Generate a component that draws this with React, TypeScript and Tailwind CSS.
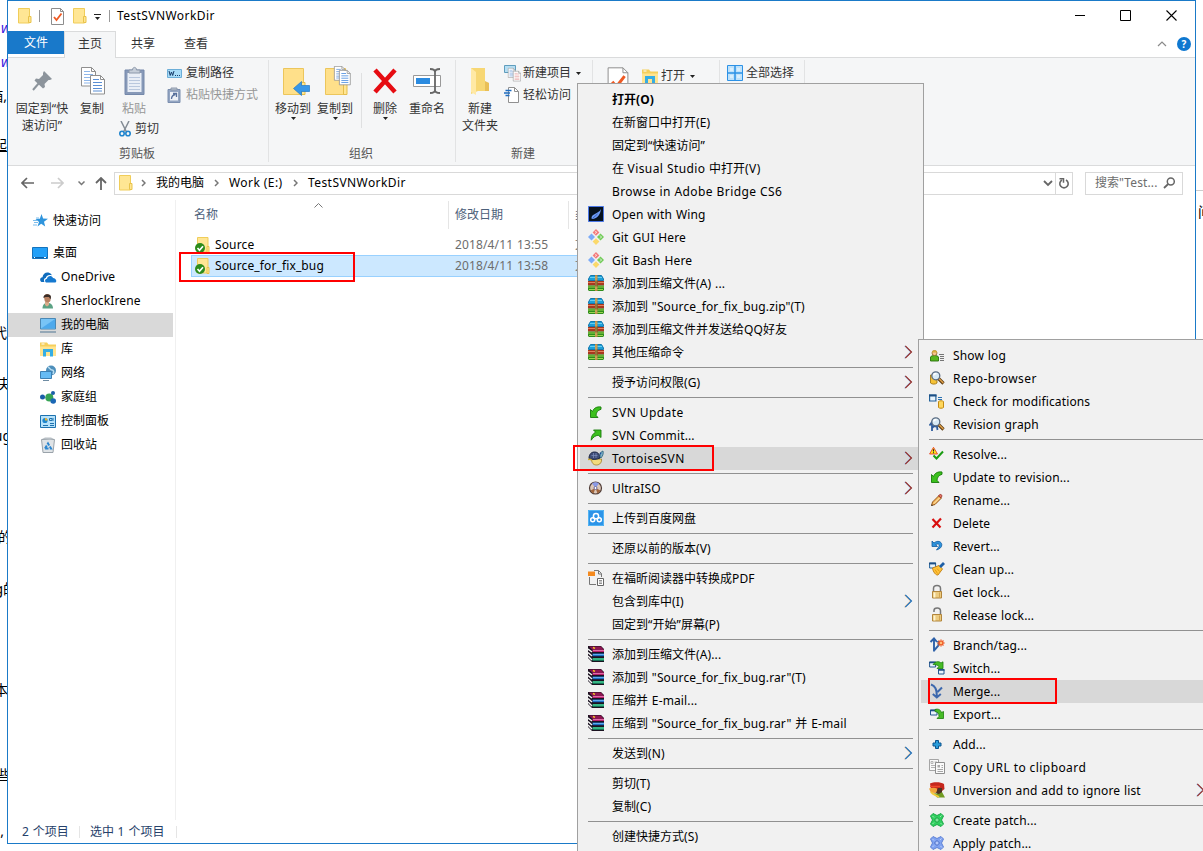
import type { ReactNode } from 'react';

type IconProps = { w?: number; h?: number; vb?: string; className?: string; children: ReactNode };

function Svg({ w = 16, h = 16, vb, className = '', children }: IconProps) {
  return (
    <svg width={w} height={h} viewBox={vb ?? `0 0 ${w} ${h}`} fill="none" className={`block shrink-0 ${className}`}>
      {children}
    </svg>
  );
}

/* Latin runs are tracked a little wider than the ideographs around them. */
function Txt({ children, wide }: { children: string; wide?: boolean }) {
  const runs = children.split(/([\u2E80-\u9FFF\uFF00-\uFFEF]+)/);
  const latin = wide ? 'tracking-[0.42px]' : 'tracking-[0.13px] [word-spacing:0.6px]';
  return (
    <>
      {runs.map((r, i) =>
        i % 2 ? <span key={i}>{r}</span> : r ? <span key={i} className={latin}>{r}</span> : null,
      )}
    </>
  );
}

/* ---------- shared icons ---------- */

const FolderIcon = ({ w = 14, h = 16 }: { w?: number; h?: number }) => (
  <Svg w={w} h={h} vb="0 0 14 16">
    <path d="M.5.5h11v14.500H.5z" fill="#ffe694" stroke="#f0cd5a" />
    <path d="M10.500 8.500h2.500v6h-2.500z" fill="#ffe694" stroke="#e9c34b" />
  </Svg>
);

const Caret = ({ className = '' }: { className?: string }) => (
  <Svg w={5} h={3} className={className}>
    <path d="M0 0h5L2.500 3z" fill="#222" />
  </Svg>
);

const ArrowHead = ({ blue }: { blue?: boolean }) => (
  <Svg w={9} h={14} className="mb-[2px] ml-auto">
    <path d="M.3.800 6.500 7 .3 13.200" stroke={blue ? '#e8b98a' : '#9fc3f0'} />
    <path d="M1.300.800 7.500 7 1.300 13.200" stroke={blue ? '#0f66b5' : '#8a1f1c'} strokeWidth="1.100" />
  </Svg>
);

const Crumb = () => (
  <Svg w={5} h={8}>
    <path d="M1 1l3 3-3 3" stroke="#777" strokeWidth="1.500" />
  </Svg>
);

/* ---------- context menu icons ---------- */

const Wing = () => (
  <Svg>
    <path d="M.5.5h15v15H.5z" fill="#06121f" stroke="#4c78e8" />
    <path d="M13 3C12.500 8 10 12 5 13c-2.500.5-1.500-3.500 1-4.500C9 6.500 12 5.500 13 3z" fill="#6d9bf5" />
    <path d="M4.500 12.500l5-4.500" stroke="#3a62c0" />
  </Svg>
);
const Git = () => (
  <Svg>
    <path d="M8 0l3.400 3.400L8 6.800 4.600 3.400z" fill="#f47c7c" />
    <path d="M8 9.200l3.400 3.400L8 16l-3.400-3.400z" fill="#fbd96b" />
    <path d="M3.500 4.500L7 8l-3.500 3.500L0 8z" fill="#7cabf8" />
    <path d="M12.500 4.500L16 8l-3.500 3.500L9 8z" fill="#72cb58" />
    <path d="M7.500 2l1 1.500-1.500 1M12 6.500l1.500 1.500-1.500 1.500" stroke="#fff" strokeWidth=".8" />
  </Svg>
);
const Zip = () => (
  <Svg>
    <path d="M2.500.5h11l2 3.500v1.500H.5V4z" fill="#1d9fd8" stroke="#1479ae" />
    <path d="M2 2.500h12" stroke="#66cff0" />
    <path d="M0 6h16v4.500H0z" fill="#a9371f" />
    <path d="M0 7.500h16" stroke="#e0805a" />
    <path d="M0 10.500h16V15l-1 1H1l-1-1z" fill="#2f8d1d" />
    <path d="M0 12h16M1 14.500h14" stroke="#9ad34e" />
    <path d="M7 0h2.500v16H7z" fill="#b98a43" />
    <path d="M7 5.500h2.500v6H7z" fill="#6e4712" />
    <path d="M8 1v14" stroke="#e5c47d" strokeWidth=".7" />
  </Svg>
);
const Rar = () => (
  <Svg>
    <path d="M0 0h13l3 3v13H4L0 12z" fill="#1b1220" />
    <path d="M1 .5h12l2.500 3H4z" fill="#8e1450" />
    <path d="M4.500 3.500H16v2.500H4.500z" fill="#b8206e" />
    <path d="M5 4.500h11" stroke="#ea7cb4" strokeWidth=".8" />
    <path d="M4.500 7.500H16v2.700H4.500z" fill="#1d6cc4" />
    <path d="M5 8.500h11" stroke="#6cbcf5" strokeWidth=".8" />
    <path d="M4.500 12H16v2.700H4.500z" fill="#129a6a" />
    <path d="M5 13h11" stroke="#6fe0ac" strokeWidth=".8" />
    <path d="M0 3l4 3M0 6.500l4 3.500M0 10l4 4" stroke="#f4f4f4" strokeWidth="1.400" />
    <path d="M5 1.500l2 .8" stroke="#f5d020" strokeWidth="1.400" />
  </Svg>
);
const UpdateIcon = () => (
  <Svg>
    <path d="M2.500 5.500v8H10L8 11.300c.3-3 1.700-5 5-6V3C8.500 2.300 5.500 4.500 4.500 7.500z" fill="#3cc01d" stroke="#187a0c" strokeWidth=".9" />
  </Svg>
);
const CommitIcon = () => (
  <Svg>
    <path d="M13 10.500V3H5.500l2.200 2.200C5 6.500 3 9 3.200 13.200c2-3 4-4.500 7-5z" fill="#3cc01d" stroke="#187a0c" strokeWidth=".9" />
  </Svg>
);
const Tortoise = () => (
  <Svg>
    <path d="M3.500 9h10c.5 3-1.500 6-5 6-3 0-5-2-5-6z" fill="#f3dc7c" stroke="#9a7c28" strokeWidth=".8" />
    <path d="M1 8.500C1 4.500 3 2 6.500 2S12 4.500 12 8c-3 1.500-7 2-11 .5z" fill="#3e4d77" stroke="#1d2745" />
    <path d="M3.500 5.500h6M5.500 3v5M8 3v5" stroke="#8190bd" strokeWidth=".7" />
    <path d="M12 7c0-3 .5-5.500 3-6 .8 3-.5 5-2 7z" fill="#82b2c9" stroke="#285f79" strokeWidth=".8" />
    <path d="M0 9.500c1.500-.5 3 0 4 1" stroke="#c9a739" strokeWidth="1.500" />
    <circle cx="12.500" cy="3.300" r=".9" fill="#174d9b" />
  </Svg>
);
const Ultra = () => (
  <Svg>
    <circle cx="7.500" cy="8" r="6" fill="#dcc7b7" stroke="#4f3d38" strokeWidth="1.200" />
    <path d="M7.500 8L4 3.500a6 6 0 0 1 7 0z" fill="#8a9ae6" />
    <path d="M7.500 8l5 2.500a6 6 0 0 1-3 3zM7.500 8l-5 2.500a6 6 0 0 0 3 3z" fill="#a0653c" />
    <circle cx="7.500" cy="8" r="1.500" fill="#fff" stroke="#6b6b9d" />
  </Svg>
);
const Baidu = () => (
  <Svg>
    <path d="M0 0h16v16H0z" fill="#2c94e8" />
    <path d="M.5.5h15v15H.5z" stroke="#54b4f2" />
    <g stroke="#fff" strokeWidth="1.500">
      <circle cx="8" cy="6.200" r="2.600" />
      <circle cx="4.700" cy="9.800" r="2" />
      <circle cx="11.300" cy="9.800" r="2" />
    </g>
  </Svg>
);
const Foxit = () => (
  <Svg>
    <path d="M1.500 7v7.500H8M6 .5h4.500l3 3V7M10.500.5v3.500h3" stroke="#777" />
    <path d="M0 1.500h7V6H0z" fill="#f58a1f" />
    <path d="M9.500 8.500h6v7h-6z" fill="#fff" stroke="#666" />
    <path d="M11 10.500h3M11 12h3M11 13.500h3" stroke="#777" strokeWidth=".8" />
  </Svg>
);

/* ---------- submenu icons ---------- */

const ShowLog = () => (
  <Svg>
    <path d="M1.500 14v-4c1-2 7-2 8 0v4z" fill="#58b51e" stroke="#28730b" strokeWidth=".9" />
    <circle cx="5.500" cy="6" r="2.500" fill="#f7c793" stroke="#8d6724" strokeWidth=".8" />
    <path d="M3 5.500c0-3 5-3 5 0z" fill="#d9ae3c" />
    <path d="M10 7.500h5M11 9.500h4M11 11.500h4M11 13.500h4" stroke="#666" strokeWidth=".9" />
  </Svg>
);
const Magnifier = () => (
  <g>
    <path d="M9.500 8.500l5 5" stroke="#5b3a12" strokeWidth="3.200" />
    <path d="M9.800 8.500l4.500 4.500" stroke="#e2a24a" strokeWidth="1.500" />
    <circle cx="6.800" cy="5.800" r="4" fill="#d8eaf5" stroke="#5a6b80" strokeWidth="1.300" />
    <path d="M4.500 5.500c.5-1.500 1.500-2 3-2" stroke="#fff" strokeWidth="1.300" />
  </g>
);
const RepoBrowser = () => (
  <Svg>
    <path d="M1.500 5v8c1.500 1.500 5 1.500 6.500 0V5z" fill="#f5c236" stroke="#9a6e0d" strokeWidth=".8" />
    <Magnifier />
  </Svg>
);
const CheckMods = () => (
  <Svg>
    <path d="M.6 2h6.300v6H.6z" fill="#e8f3fc" stroke="#24639b" strokeWidth="1.200" />
    <path d="M0 2.500h7.500" stroke="#1d4f85" strokeWidth="2" />
    <path d="M9 4.500h4M9 6.500h4" stroke="#2d72b1" />
    <path d="M9.500 8.500c1-1 4-1 5 0v6c-1 1-4 1-5 0z" fill="#ffd75c" stroke="#c38b13" />
  </Svg>
);
const RevGraph = () => (
  <Svg>
    <path d="M3 15V6M3 12l4-4M.5 9.500L3 6l2 3M4 10l4 .5L8.500 14" stroke="#2d5c9e" strokeWidth="1.800" />
    <Magnifier />
  </Svg>
);
const Resolve = () => (
  <Svg>
    <path d="M4.500 1.300L8.500 8H.6z" fill="#ffe81a" stroke="#e8402a" strokeWidth=".9" />
    <path d="M4.500 3.200v2.300M4.500 6.200v1" stroke="#222" strokeWidth="1.100" />
    <path d="M4.500 9.500l3 3L14 5.500" stroke="#1b9c13" strokeWidth="2" />
  </Svg>
);
const Pencil = () => (
  <Svg>
    <path d="M2.500 13.500l1-3.500 6.500-6.500 2.500 2.500L6 12.500z" fill="#f3b35a" stroke="#8a4c10" strokeWidth=".9" />
    <path d="M9.500 3.800l1.500-1.300c1.300-.3 2 .5 1.800 1.800l-1 1.500z" fill="#e37568" stroke="#94281d" strokeWidth=".8" />
    <path d="M5 11.500l5.500-5.500" stroke="#fff2be" />
    <path d="M2.200 14l.6-1.700 1.200 1.200z" fill="#333" />
  </Svg>
);
const Delete = () => (
  <Svg>
    <path d="M3.500 4l8 8.500M12 3.500L3.500 12.500" stroke="#d90f0f" strokeWidth="2.200" />
  </Svg>
);
const Revert = () => (
  <Svg>
    <path d="M3 3v5.500h5.500L6.600 6.700c2-1.500 4.200-.8 3.600 1.400-.4 1.300-1.500 2-2.700 3.900 3.500-1 5.500-3 5.300-5.400C12.500 3.400 8.500 2 5 5z" fill="#2e94dd" stroke="#115a9f" strokeWidth=".8" />
  </Svg>
);
const CleanUp = () => (
  <Svg>
    <path d="M.6 2h6v5h-6z" fill="#e8f3fc" stroke="#24639b" />
    <path d="M0 2.500h7" stroke="#1d4f85" strokeWidth="1.800" />
    <path d="M3.500 7l6.500-2.500 3.500 3.500-4.500 6c-2 .5-5-3-5.500-7z" fill="#ffc43b" stroke="#bf7c0d" strokeWidth=".9" />
    <path d="M6 8.500l2.500 4M8 7.500l2.500 3" stroke="#e89912" />
    <path d="M11 6l4-4" stroke="#1e5fa6" strokeWidth="2.800" />
  </Svg>
);
const Lock = ({ open }: { open?: boolean }) => (
  <Svg>
    <path d={open ? 'M5 5V3.500c0-3 6-3.500 6.500 0V8' : 'M4.500 8V4.500c0-4 7-4 7 0V8'} stroke="#777" strokeWidth="1.500" />
    <path d="M3.500 7.500h9v6.500h-9z" fill="#eccb80" stroke="#b2853b" />
    <path d="M5.500 8.500v5" stroke="#fff4cf" strokeWidth="1.800" />
    <path d="M10.500 8.500v5" stroke="#d3a551" />
  </Svg>
);
const Branch = () => (
  <Svg>
    <path d="M5 14.500V2M1.500 5L5 1.500 8 5M5.500 13l4-4.500V4" stroke="#2d60a8" strokeWidth="1.900" />
    <path d="M12 2.500v7M8.500 6h7M9.500 3.500l5 5M14.500 3.500l-5 5" stroke="#ef5a24" strokeWidth="1.300" />
    <circle cx="12" cy="6" r="1.200" fill="#ffc07b" />
  </Svg>
);
const SwitchIcon = () => (
  <Svg>
    <path d="M.6 2h6v5h-6zM9.500 9.500H15v4.500H9.500z" fill="#e8f3fc" stroke="#24578f" />
    <path d="M0 2.500h7M9 10h6.500" stroke="#1d4f85" strokeWidth="1.600" />
    <path d="M4 4.500C6.500 1 10 1 12 3l2-1.200V8.500H8l2-2c-1.500-1.500-3-1.800-6-2z" fill="#47bc27" stroke="#1c7d0d" strokeWidth=".8" />
  </Svg>
);
const Merge = () => (
  <Svg>
    <path d="M2 1.500C6 3 8 5.500 7.800 15M13 4.500L8.500 9M3.800 11l4 3.500 4-3.500" stroke="#3c68ad" strokeWidth="2" />
  </Svg>
);
const ExportIcon = () => (
  <Svg>
    <path d="M1.500 4h6.500v5H1.500z" fill="#e8f3fc" stroke="#24578f" />
    <path d="M1 4.500h7.500" stroke="#1d4f85" strokeWidth="1.600" />
    <path d="M6 3.500c3-1 5.500 0 6.500 3l2-1v7H8l2-2c0-3-1-4.500-4-5z" fill="#47bc27" stroke="#1c7d0d" strokeWidth=".8" />
  </Svg>
);
const Add = () => (
  <Svg>
    <path d="M6.500 4.500h3V7H12v3H9.500v2.500h-3V10H4V7h2.500z" fill="#2a9ddb" stroke="#0c548f" />
  </Svg>
);
const CopyUrl = () => (
  <Svg>
    <path d="M.5.5h9v11h-9z" fill="#fafafa" stroke="#a5a5a5" />
    <path d="M2 2.500h2v2H2zM5.500 3h2.500M2 6.500h5M2 8.500h5" stroke="#b5b5b5" />
    <path d="M6.500 3.500h9v11h-9z" fill="#fafafa" stroke="#8f8f8f" />
    <path d="M8.500 6h2.500v2.500H8.500z" fill="#aaa" />
    <path d="M12.500 6.500H14M12.500 8.500H14M8.500 10.500H14M8.500 12.500H14" stroke="#a5a5a5" />
  </Svg>
);
const Unversion = () => (
  <Svg>
    <path d="M1 1.500C5-.3 12 0 15 2l.5 5-5 4-8-1z" fill="#c5261c" />
    <path d="M0 6.500c3-1 6-1 8 0v4l-6 .5z" fill="#f0a43a" />
    <path d="M9 6h4v5l-3 2-3-2z" fill="#4d3323" />
    <path d="M5 11l5 1 3-2 3 5.500H8z" fill="#719b22" />
    <path d="M2 10c2 3 5 3 8 5" stroke="#f2cb39" strokeWidth="1.800" />
    <path d="M1 4.500h10" stroke="#ef4a2a" strokeWidth="1.500" />
  </Svg>
);
const Patch = ({ blue }: { blue?: boolean }) => (
  <Svg>
    <path
      d="M4 1.500L8 3.500l4-2 2.500 2.500-2 4 2 4-2.500 2.500-4-2-4 2L1.500 12l2-4-2-4z"
      fill={blue ? '#7fa2f0' : '#30cf5f'}
      stroke={blue ? '#5f82d6' : '#1ba747'}
      strokeLinejoin="round"
    />
    <path d="M8 5.500L10.500 8 8 10.500 5.500 8z" fill={blue ? '#b4c9fb' : '#7be89a'} stroke={blue ? '#3557b5' : '#0d8a34'} strokeWidth=".8" />
    <path d="M3.500 4l1.500 1.500M11.500 11l1.500 1.500M3.500 12l1.500-1.500M11 5l1.500-1.500" stroke="#ffffff88" />
  </Svg>
);

/* ---------- menus ---------- */

type Item = { t: string; icon?: ReactNode; sub?: 'red' | 'blue'; on?: boolean; bold?: boolean; wide?: boolean } | '-';

const mainItems: Item[] = [
  { t: '打开(O)', bold: true },
  { t: '在新窗口中打开(E)' },
  { t: '固定到“快速访问”' },
  { t: '在 Visual Studio 中打开(V)', wide: true },
  { t: 'Browse in Adobe Bridge CS6', wide: true },
  { t: 'Open with Wing', icon: <Wing /> },
  { t: 'Git GUI Here', icon: <Git /> },
  { t: 'Git Bash Here', icon: <Git /> },
  { t: '添加到压缩文件(A) ...', icon: <Zip /> },
  { t: '添加到 "Source_for_fix_bug.zip"(T)', icon: <Zip /> },
  { t: '添加到压缩文件并发送给QQ好友', icon: <Zip /> },
  { t: '其他压缩命令', icon: <Zip />, sub: 'red' },
  '-',
  { t: '授予访问权限(G)', sub: 'red' },
  '-',
  { t: 'SVN Update', icon: <UpdateIcon />, wide: true },
  { t: 'SVN Commit...', icon: <CommitIcon /> },
  { t: 'TortoiseSVN', icon: <Tortoise />, sub: 'red', on: true, wide: true },
  '-',
  { t: 'UltraISO', icon: <Ultra />, sub: 'red' },
  '-',
  { t: '上传到百度网盘', icon: <Baidu /> },
  '-',
  { t: '还原以前的版本(V)' },
  '-',
  { t: '在福昕阅读器中转换成PDF', icon: <Foxit /> },
  { t: '包含到库中(I)', sub: 'blue' },
  { t: '固定到“开始”屏幕(P)' },
  '-',
  { t: '添加到压缩文件(A)...', icon: <Rar /> },
  { t: '添加到 "Source_for_fix_bug.rar"(T)', icon: <Rar /> },
  { t: '压缩并 E-mail...', icon: <Rar /> },
  { t: '压缩到 "Source_for_fix_bug.rar" 并 E-mail', icon: <Rar /> },
  '-',
  { t: '发送到(N)', sub: 'blue' },
  '-',
  { t: '剪切(T)' },
  { t: '复制(C)' },
  '-',
  { t: '创建快捷方式(S)' },
];

const svnItems: Item[] = [
  { t: 'Show log', icon: <ShowLog /> },
  { t: 'Repo-browser', icon: <RepoBrowser />, wide: true },
  { t: 'Check for modifications', icon: <CheckMods /> },
  { t: 'Revision graph', icon: <RevGraph /> },
  '-',
  { t: 'Resolve...', icon: <Resolve /> },
  { t: 'Update to revision...', icon: <UpdateIcon /> },
  { t: 'Rename...', icon: <Pencil /> },
  { t: 'Delete', icon: <Delete /> },
  { t: 'Revert...', icon: <Revert /> },
  { t: 'Clean up...', icon: <CleanUp /> },
  { t: 'Get lock...', icon: <Lock /> },
  { t: 'Release lock...', icon: <Lock open /> },
  '-',
  { t: 'Branch/tag...', icon: <Branch /> },
  { t: 'Switch...', icon: <SwitchIcon /> },
  { t: 'Merge...', icon: <Merge />, on: true },
  { t: 'Export...', icon: <ExportIcon /> },
  '-',
  { t: 'Add...', icon: <Add /> },
  { t: 'Copy URL to clipboard', icon: <CopyUrl />, wide: true },
  { t: 'Unversion and add to ignore list', icon: <Unversion />, sub: 'red' },
  '-',
  { t: 'Create patch...', icon: <Patch /> },
  { t: 'Apply patch...', icon: <Patch blue /> },
];

function MenuRows({ items }: { items: Item[] }) {
  return (
    <>
      {items.map((it, i) =>
        it === '-' ? (
          <div key={i} className="ml-2 mr-2 h-[7px] pt-[3px]">
            <div className="h-px bg-[#919191]" />
          </div>
        ) : (
          <div key={i} className={`flex h-[23px] items-center pl-2 pr-[8px] ${it.on ? 'bg-[#d8d8d8]' : ''}`}>
            <div className="mb-px mr-2 h-4 w-4 shrink-0">{it.icon}</div>
            <span className={it.bold ? 'font-bold' : ''}>
              <Txt wide={it.wide}>{it.t}</Txt>
            </span>
            {it.sub && <ArrowHead blue={it.sub === 'blue'} />}
          </div>
        ),
      )}
    </>
  );
}

/* ---------- title bar and tabs ---------- */

const DocCheck = ({ w = 13, h = 17 }: { w?: number; h?: number }) => (
  <Svg w={w} h={h} vb="0 0 13 17">
    <path d="M.5.5h9l3 3v13H.5z" fill="#fff" stroke="#8d8d8d" strokeWidth={w > 13 ? 0.6 : 1} />
    <path d="M9.500.5v3h3" stroke="#8d8d8d" strokeWidth={w > 13 ? 0.6 : 1} />
    <path d="M3 9l2.500 3L10.500 5.500" stroke="#ee5a24" strokeWidth="1.800" />
  </Svg>
);

function TitleBar() {
  return (
    <div className="flex h-[30px] items-center pl-[10px] pr-[18px]">
      <FolderIcon />
      <div className="ml-[7px] h-[12px] w-px bg-[#999]" />
      <div className="ml-[11px]"><DocCheck /></div>
      <div className="ml-[9px]"><FolderIcon /></div>
      <Svg w={8} h={7} className="ml-[7px] mt-[3px]">
        <path d="M0 .5h7" stroke="#222" />
        <path d="M1 3h5L3.500 6z" fill="#222" />
      </Svg>
      <div className="ml-[7px] h-[12px] w-px bg-[#999]" />
      <span className="ml-[7px]"><Txt wide>TestSVNWorkDir</Txt></span>
      <div className="mb-[2px] ml-auto flex items-center gap-[35px]">
        <Svg w={10} h={11}><path d="M0 5.500h10" stroke="#000" /></Svg>
        <Svg w={11} h={11}><path d="M.5.5h10v10H.5z" stroke="#000" /></Svg>
        <Svg w={11} h={11}><path d="M.5.5l10 10M10.500.5l-10 10" stroke="#000" strokeWidth="1.100" /></Svg>
      </div>
    </div>
  );
}

function Tabs() {
  return (
    <div className="flex h-[27px] border-b border-[#dadbdc] text-[#333]">
      <div className="flex h-[23px] w-14 items-center justify-center bg-[#1979ca] text-white">文件</div>
      <div className="-mb-px flex h-[27px] w-[52px] items-center justify-center border border-b-0 border-[#dadbdc] bg-[#f5f6f7] pb-[3px]">主页</div>
      <div className="flex h-[25px] w-[54px] items-center justify-center">共享</div>
      <div className="flex h-[25px] w-[52px] items-center justify-center">查看</div>
      <div className="ml-auto mr-[4px] flex h-[26px] items-center gap-[10px]">
        <Svg w={10} h={6}><path d="M1 5l4-4 4 4" stroke="#8a8a8a" strokeWidth="1.200" /></Svg>
        <div className="flex h-[14px] w-[14px] items-center justify-center rounded-full bg-[#0f78d0] text-[10px] font-bold leading-none text-white">?</div>
      </div>
    </div>
  );
}

/* ---------- ribbon ---------- */

function Group({ className, label, children }: { className: string; label?: string; children: ReactNode }) {
  return (
    <div className={`flex shrink-0 flex-col pt-[2px] ${className}`}>
      <div className="flex h-[102px] flex-col border-r border-[#e2e3e4]">
        <div className="flex h-[85px]">{children}</div>
        <div className="flex h-[17px] items-center justify-center pr-[2px] pt-px leading-none text-[#555]">{label}</div>
      </div>
    </div>
  );
}

function Big({ className, icon, lines, caret, muted }: { className: string; icon: ReactNode; lines: string[]; caret?: boolean; muted?: boolean }) {
  return (
    <div className={`flex shrink-0 flex-col items-center ${className}`}>
      <div className="flex h-[40px] items-center justify-center pt-[2px]">{icon}</div>
      {lines.map((l) => (
        <div key={l} className={`h-[17px] whitespace-nowrap leading-[17px] ${muted ? 'text-[#969696]' : ''}`}>{l}</div>
      ))}
      {caret && <Caret />}
    </div>
  );
}

function Small({ icon, label, caret, muted }: { icon: ReactNode; label: string; caret?: boolean; muted?: boolean }) {
  return (
    <div className="flex h-[22px] items-center whitespace-nowrap">
      <div className="flex w-[19px] shrink-0 items-center">{icon}</div>
      <span className={muted ? 'text-[#969696]' : ''}>{label}</span>
      {caret && <Caret className="ml-[5px]" />}
    </div>
  );
}

const PinIcon = () => (
  <Svg w={20} h={20}>
    <path d="M12 0l8 8-2 1-1.500 0-4 4 .5 3-2 1.500L2.500 9.500 4 7.500l3 .5 4-4V2z" fill="#8c949c" />
    <path d="M7 12l-6 7" stroke="#8c949c" strokeWidth="2" />
  </Svg>
);
const Page = ({ x, y, s = 1, c = '#5b8fd4' }: { x: number; y: number; s?: number; c?: string }) => (
  <g transform={`translate(${x} ${y}) scale(${s})`}>
    <path d="M.5.5h10l4 4v14.500H.5z" fill="#fff" stroke="#8f8f8f" />
    <path d="M10.500.5v4h4" stroke="#8f8f8f" />
    <path d="M3 4.500h6M3 7.500h9M3 10.500h9M3 13.500h9M3 16h9" stroke={c} />
  </g>
);
const CopyIcon = () => (
  <Svg w={25} h={28} className="ml-[2px]">
    <Page x={0} y={0} c="#8fb7ea" />
    <Page x={9} y={8} />
  </Svg>
);
const PasteIcon = () => (
  <Svg w={21} h={30}>
    <path d="M1 4h19v24.500H1z" fill="#8799b8" stroke="#7488aa" />
    <path d="M3.500 7h14v19h-14z" fill="#e9eef6" />
    <path d="M5 11.500h11M5 14.500h11M5 17.500h11M5 20.500h11M5 23.500h11" stroke="#b9c7dd" />
    <path d="M5 7V4h3.500c0-3.500 4-3.500 4 0H16v3z" fill="#c6ced9" stroke="#8c98aa" />
  </Svg>
);
const Scissors = () => (
  <Svg w={12} h={16}>
    <path d="M2 0l5.500 11M10 0L4.500 11" stroke="#848c95" strokeWidth="1.500" />
    <ellipse cx="3" cy="12.500" rx="2.200" ry="2.300" stroke="#1f84cd" strokeWidth="1.600" />
    <ellipse cx="9" cy="12.500" rx="2.200" ry="2.300" stroke="#1f84cd" strokeWidth="1.600" />
  </Svg>
);
const CopyPath = () => (
  <Svg w={15} h={9}>
    <path d="M.5.5h14v8H.5z" fill="#a8dcf8" stroke="#6caed8" />
    <path d="M2 2l1.200 4.500L4.500 3l1.200 3.500L7 2M8 6.500h1M10 6.500h1M12 6.500h1" stroke="#173d6b" />
  </Svg>
);
const PasteShortcut = () => (
  <Svg w={14} h={16}>
    <path d="M1 2.500h12v13H1z" fill="#93a5c2" stroke="#7b8eae" />
    <path d="M3 5h8v8.500H3z" fill="#edf1f7" />
    <path d="M4 3V1h6v2z" fill="#bcc6d3" stroke="#8c98aa" />
    <path d="M4.500 12c0-3 1-4 4-4.500M6 6.500h3.500V10" stroke="#58709c" strokeWidth="1.300" />
  </Svg>
);
const FolderBase = () => (
  <>
    <path d="M.5 2.500h20v26H.5z" fill="#ffe08a" stroke="#ecc65c" />
    <path d="M18.500 16.500h3.500v12h-3.500z" fill="#ffe694" stroke="#e5bd4b" />
  </>
);
const MoveTo = () => (
  <Svg w={27} h={30} className="ml-[6px]">
    <FolderBase />
    <path d="M10.500 22.500l8-7v4h8v6h-8v4z" fill="#3797e8" stroke="#2478c4" strokeWidth=".7" />
  </Svg>
);
const CopyTo = () => (
  <Svg w={27} h={30} className="ml-[6px]">
    <FolderBase />
    <Page x={9} y={0} s={0.75} />
    <Page x={14} y={4} s={0.78} c="#3f86dd" />
  </Svg>
);
const DeleteBig = () => (
  <Svg w={26} h={26}>
    <path d="M3 2l20 22M23 2L3 24" stroke="#e60c12" strokeWidth="4.500" />
  </Svg>
);
const RenameBig = () => (
  <Svg w={28} h={27}>
    <path d="M.5 7.500h27v11H.5z" fill="#fff" stroke="#999" />
    <path d="M3 10h14v6H3z" fill="#2b8be0" />
    <path d="M17 1c3 0 5 1 5 3v18c0 2-2 3-5 3M27 1c-3 0-5 1-5 3M22 22c0 2 2 3 5 3" stroke="#666" strokeWidth="1.800" />
  </Svg>
);
const NewFolder = () => (
  <Svg w={20} h={28}>
    <path d="M1 1h14v14l4 1v8H8L1 27z" fill="#f7d774" />
    <path d="M1 1l5 4v23l-5-3z" fill="#ffe9a5" />
    <path d="M15 14l4 2v8h-4z" fill="#e9bf57" />
  </Svg>
);
const NewItem = () => (
  <Svg w={17} h={17}>
    <path d="M.5.5h11v7H.5z" fill="#b6def3" stroke="#5f9dbd" />
    <Page x={4} y={3} s={0.5} />
    <Page x={9} y={6} s={0.53} c="#e08a8a" />
  </Svg>
);
const EasyAccess = () => (
  <Svg w={16} h={16}>
    <path d="M4.500.5h6l4 4v11h-10z" fill="#fff" stroke="#909090" />
    <path d="M10.500.5v4h4" stroke="#909090" />
    <path d="M1.500 3.500h6M0 6h6M1.500 8.500h4" stroke="#1e6cc0" strokeWidth="1.300" />
  </Svg>
);
const Library = () => (
  <Svg w={16} h={15}>
    <path d="M0 .5h7l1.500 2H16V14H0z" fill="#f5cf5c" />
    <path d="M0 4.500h16V14H0z" fill="#ffe490" />
    <path d="M3 14.500V7h10v7.500h-3V10H6v4.500z" fill="#35ade4" />
    <path d="M1.500 2h3" stroke="#fff" />
  </Svg>
);
const SelectAll = () => (
  <Svg w={16} h={16}>
    <path d="M.5.5h15v15H.5z" fill="#bfe2fb" stroke="#2d92e6" />
    <path d="M8 0v16M0 8h16" stroke="#2d92e6" strokeWidth="1.500" />
    <path d="M3 3h3v3H3zM10 3h3v3h-3zM3 10h3v3H3zM10 10h3v3h-3z" fill="#d9effd" />
  </Svg>
);

function Ribbon() {
  return (
    <div className="flex h-[108px] border-b border-[#dadbdc] bg-[#f5f6f7] text-[#333]">
      <Group className="w-[261px]" label="剪贴板">
        <Big className="ml-1 w-[60px]" icon={<PinIcon />} lines={['固定到“快', '速访问”']} />
        <Big className="ml-px w-[38px]" icon={<CopyIcon />} lines={['复制']} />
        <div className="ml-1 w-[51px]">
          <Big className="w-[38px]" icon={<PasteIcon />} lines={['粘贴']} muted />
          <div className="flex h-[23px] items-center gap-1 whitespace-nowrap pl-[4px] pt-px"><Scissors />剪切</div>
        </div>
        <div className="pl-px pt-[2px]">
          <Small icon={<CopyPath />} label="复制路径" />
          <Small icon={<PasteShortcut />} label="粘贴快捷方式" muted />
        </div>
      </Group>
      <Group className="w-[187px]" label="组织">
        <Big className="ml-[3px] w-[42px]" icon={<MoveTo />} lines={['移动到']} caret />
        <Big className="w-[42px]" icon={<CopyTo />} lines={['复制到']} caret />
        <div className="ml-[5px] mt-[13px] h-[55px] w-px bg-[#dfe0e1]" />
        <Big className="ml-[2px] w-[42px]" icon={<DeleteBig />} lines={['删除']} caret />
        <Big className="w-[42px]" icon={<RenameBig />} lines={['重命名']} />
      </Group>
      <Group className="w-[137px]" label="新建">
        <Big className="ml-[3px] w-[42px]" icon={<NewFolder />} lines={['新建', '文件夹']} />
        <div className="pl-[3px] pt-[2px]">
          <Small icon={<NewItem />} label="新建项目" caret />
          <Small icon={<EasyAccess />} label="轻松访问" />
        </div>
      </Group>
      <Group className="w-[127px]">
        <div className="pl-[14px] pt-[7px]"><DocCheck w={22} h={28} /></div>
        <div className="pl-[13px] pt-[5px]">
          <Small icon={<Library />} label="打开" caret />
        </div>
      </Group>
      <Group className="w-[85px]">
        <div className="pl-[7px] pt-[2px]">
          <Small icon={<SelectAll />} label="全部选择" />
        </div>
      </Group>
    </div>
  );
}

/* ---------- address row ---------- */

function AddressRow() {
  return (
    <div className="flex h-[34px] items-center pl-[13px]">
      <Svg w={13} h={12}><path d="M13 6H1M6 1L1 6l5 5" stroke="#666" strokeWidth="1.700" /></Svg>
      <Svg w={13} h={12} className="ml-[17px]"><path d="M0 6h12M7 1l5 5-5 5" stroke="#ccc" strokeWidth="1.700" /></Svg>
      <Svg w={7} h={5} className="ml-[14px]"><path d="M.5.5l3 3 3-3" stroke="#777" strokeWidth="1.500" /></Svg>
      <Svg w={12} h={13} className="ml-[10px]"><path d="M6 13V1M1 6l5-5 5 5" stroke="#666" strokeWidth="1.800" /></Svg>
      <div className="ml-[7px] flex h-[23px] w-[959px] items-center border border-[#d9d9d9] bg-white pl-1">
        <FolderIcon />
        <div className="ml-[8px]"><Crumb /></div>
        <span className="ml-[10px]">我的电脑</span>
        <div className="ml-[10px]"><Crumb /></div>
        <span className="ml-[10px] w-[54px] whitespace-nowrap"><Txt wide>Work (E:)</Txt></span>
        <div className="ml-[10px]"><Crumb /></div>
        <span className="ml-[10px]"><Txt wide>TestSVNWorkDir</Txt></span>
        <Svg w={10} h={7} className="ml-auto mr-[2px]"><path d="M1 1l4 4 4-4" stroke="#666" strokeWidth="1.800" /></Svg>
        <div className="flex h-full w-[17px] items-center justify-center border-l border-[#d9d9d9]">
          <Svg w={12} h={13}>
            <path d="M8 3A4.200 4.200 0 1 1 4 3" stroke="#666" strokeWidth="1.600" />
            <path d="M1.500 1.800h4v4" stroke="#666" strokeWidth="1.500" />
          </Svg>
        </div>
      </div>
      <div className="ml-3 flex h-[23px] w-[98px] items-center border border-[#d9d9d9] pl-[9px] text-[#6d6d6d]">
        <Txt>搜索"Test...</Txt>
        <Svg w={13} h={12} className="ml-[5px]">
          <circle cx="7.800" cy="4.500" r="3.500" stroke="#666" strokeWidth="1.500" />
          <path d="M5.200 7L1 11" stroke="#666" strokeWidth="1.800" />
        </Svg>
      </div>
    </div>
  );
}

/* ---------- sidebar ---------- */

const Star = () => (
  <Svg w={16} h={14}>
    <path d="M8.500 0l1.600 4.500 4.900.2-4 3 1.200 4.800L8.200 9.800 4.500 12.500 6 8.100 2.500 5l4.300-.3z" fill="#2f94dc" />
    <path d="M0 6.500h4M1 8.500h4M0 11h4M3 4h3" stroke="#7bbcec" />
  </Svg>
);
const Desktop = () => (
  <Svg w={16} h={12}>
    <path d="M.5.5h15v11H.5z" fill="#22a0f8" stroke="#1573bd" />
    <path d="M1 10.500h14" stroke="#0b5fa5" />
    <path d="M2 10.500h1M12 10.500h2" stroke="#fff" />
  </Svg>
);
const Cloud = () => (
  <Svg w={17} h={12}>
    <path d="M1.500 11C-.8 9.500 0 6.500 2.500 6.200 3 2.500 6.500.5 9.500 2c1.500.5 2 1.500 2.400 2.300C8.500 3 6 5 5.800 7 3.800 7.500 3.500 9.500 4.500 11z" fill="#0f6cbd" />
    <path d="M6 11.500C4.500 10.500 4.800 8 7 7.800 7.500 4.800 11.500 4 13 7c2.500 0 4.500 3 2.500 4.500z" fill="#1579d0" />
  </Svg>
);
const User = () => (
  <Svg>
    <path d="M2.500 15.500c0-3.500 1.500-5.500 5-5.500s5.500 2 5.500 5.500z" fill="#5ba284" />
    <path d="M5 9h4v3l-2 1.500L5 12z" fill="#d9ad8c" />
    <path d="M4 3.500C4 0 10.500 0 10.500 4v3.500C10 10 5 10.500 4.500 7z" fill="#b98262" />
    <path d="M3.500 5C3 .5 11 0 11 4l-.5 2.500L9 4H5.500z" fill="#3a2d28" />
  </Svg>
);
const Pc = () => (
  <Svg w={16} h={15}>
    <path d="M.5.5h15v10.500H.5z" fill="#78c4f6" stroke="#4a88b5" />
    <path d="M1 10.500L15 1v9.500z" fill="#4da9ec" />
    <path d="M0 14h16" stroke="#6e8ca3" strokeWidth="1.300" />
  </Svg>
);
const Network = () => (
  <Svg>
    <circle cx="11" cy="5.500" r="5" fill="#4e8fbb" />
    <path d="M8 2c2 1 2 3 4 3s2 2 1 4" stroke="#b8dcf0" strokeWidth="1.500" />
    <path d="M.5 6.500h11v7H.5z" fill="#65bbf4" stroke="#3d80b3" />
    <path d="M3 15.500h6" stroke="#6e8ca3" />
  </Svg>
);
const HomeGroup = () => (
  <Svg w={16} h={13}>
    <path d="M2.500 6l7 1 3-5M10 7l3 3" stroke="#9bc6df" />
    <circle cx="2.500" cy="6" r="2.500" fill="#1b5fa8" />
    <circle cx="9.300" cy="6.500" r="4" fill="#37a455" />
    <circle cx="13" cy="2" r="2" fill="#1b5fa8" />
    <circle cx="13.200" cy="10" r="2.800" fill="#1b67b5" />
  </Svg>
);
const ControlPanel = () => (
  <Svg w={16} h={13}>
    <path d="M.5.5h15v12H.5z" fill="#b6e2fb" stroke="#1e72af" />
    <circle cx="5" cy="5.500" r="2.600" fill="#1f86cd" />
    <path d="M5 5.500V2.900a2.600 2.600 0 0 1 2.600 2.600z" fill="#f3b429" />
    <path d="M9.500 3.500H12v2H9.500zM3 10.500h5M10 8.500h4M10 10.500h4M13 3v3" stroke="#1e72af" />
  </Svg>
);
const Recycle = () => (
  <Svg w={14} h={16}>
    <path d="M.5 2.500L2 15.500h10l1.500-13z" fill="#dfe3e6" stroke="#9aa3aa" />
    <path d="M1 2l3-1.500h6L13 2 9 3z" fill="#b8bfc5" />
    <path d="M4 11.500l3-5 3 5z" stroke="#2b86cf" strokeWidth="2" strokeDasharray="3.500 1.200" />
  </Svg>
);

const places: { t: string; icon: ReactNode; on?: boolean }[] = [
  { t: 'OneDrive', icon: <Cloud /> },
  { t: 'SherlockIrene', icon: <User /> },
  { t: '我的电脑', icon: <Pc />, on: true },
  { t: '库', icon: <Library /> },
  { t: '网络', icon: <Network /> },
  { t: '家庭组', icon: <HomeGroup /> },
  { t: '控制面板', icon: <ControlPanel /> },
  { t: '回收站', icon: <Recycle /> },
];

function Sidebar() {
  return (
    <div className="w-[168px] shrink-0 border-r border-[#f0f0f0] pt-[9px]">
      <div className="flex h-6 items-center pl-[25px]">
        <div className="mr-1 w-4"><Star /></div>快速访问
      </div>
      <div className="mt-2 flex h-6 items-center pl-6">
        <div className="mr-[5px] w-4"><Desktop /></div>桌面
      </div>
      {places.map((p) => (
        <div key={p.t} className={`mr-[2px] flex h-6 items-center pl-8 ${p.on ? 'bg-[#d9d9d9]' : ''}`}>
          <div className="mr-[5px] flex w-4 justify-center">{p.icon}</div>
          <Txt>{p.t}</Txt>
        </div>
      ))}
    </div>
  );
}

/* ---------- file list ---------- */

const VersionedFolder = () => (
  <Svg w={15} h={17}>
    <path d="M2.500.5h10.500v14.500H2.500z" fill="#ffe694" stroke="#f0cd5a" />
    <path d="M12 9.500h2v6h-2z" fill="#ffe694" stroke="#e9c34b" />
    <circle cx="5" cy="11" r="5" fill="#2d8c1b" />
    <path d="M2.500 11l2 2.200L8 9.300" stroke="#fff" strokeWidth="1.700" />
  </Svg>
);

function FileRow({ name, date, on }: { name: string; date: string; on?: boolean }) {
  return (
    <div className={`ml-[15px] flex h-[22px] w-[480px] items-center border ${on ? 'border-[#99d1ff] bg-[#cce8ff]' : 'border-transparent'}`}>
      <div className="ml-[3px]"><VersionedFolder /></div>
      <span className="ml-[5px] w-[240px]"><Txt>{name}</Txt></span>
      <span className="w-[120px] text-[#6d6d6d]"><Txt>{date}</Txt></span>
      <span className="text-[#6d6d6d]">文件夹</span>
    </div>
  );
}

function FileList() {
  return (
    <div className="flex-1 pt-px">
      <div className="flex h-[28px] text-[#4c607a]">
        <div className="flex w-[273px] items-center border-r border-[#e5e5e5] pl-[18px]">
          名称
          <Svg w={9} h={5} className="mb-[20px] ml-[96px]"><path d="M.5 4.500l4-4 4 4" stroke="#777" /></Svg>
        </div>
        <div className="flex w-[120px] items-center border-r border-[#e5e5e5] pl-[6px]">修改日期</div>
        <div className="flex items-center pl-[6px]">类型</div>
      </div>
      <div className="pt-[5px]">
        <FileRow name="Source" date="2018/4/11 13:55" />
        <div className="-mt-px">
          <FileRow name="Source_for_fix_bug" date="2018/4/11 13:58" on />
        </div>
      </div>
    </div>
  );
}

/* ---------- document behind the window ---------- */

function Fragment({ className, children }: { className: string; children: string }) {
  return <span className={`absolute whitespace-nowrap leading-none ${className}`}>{children}</span>;
}

function Backdrop() {
  return (
    <>
      <div className="absolute inset-y-0 left-0 w-[7px] overflow-hidden text-[14px] text-black">
        <Fragment className="left-[1px] top-[21px] italic text-[#3a18e0]">w</Fragment>
        <Fragment className="left-[1px] top-[55px] italic text-[#3a18e0]">w</Fragment>
        <Fragment className="right-0 top-[89px]">箱,</Fragment>
        <Fragment className="right-0 top-[138px] underline">起</Fragment>
        <Fragment className="right-0 top-[326px]">代</Fragment>
        <Fragment className="right-[-4px] top-[377px]">夫</Fragment>
        <Fragment className="right-[-4px] top-[429px]">ug</Fragment>
        <Fragment className="right-[-5px] top-[530px]">的</Fragment>
        <Fragment className="right-[-10px] top-[582px]">g的</Fragment>
        <Fragment className="right-[-1px] top-[683px]">本</Fragment>
        <Fragment className="right-[-4px] top-[768px]">些</Fragment>
        <Fragment className="right-[3px] top-[824px]">,</Fragment>
      </div>
      <div className="absolute inset-y-0 right-0 w-[7px] overflow-hidden text-[14px] text-black">
        <div className="mt-[190px] h-px bg-[#ccc]" />
        <Fragment className="left-[2px] top-[205px]">间</Fragment>
      </div>
    </>
  );
}

export default function App() {
  return (
    <div className="relative h-[851px] w-[1203px] overflow-hidden bg-white font-['Noto_Sans','Noto_Sans_CJK_SC',sans-serif] text-[12px] leading-[16px] text-black">
      <Backdrop />
      <div className="relative ml-[7px] flex h-[844px] w-[1189px] flex-col border border-[#1a7ac8] bg-white">
        <TitleBar />
        <Tabs />
        <Ribbon />
        <AddressRow />
        <div className="flex h-[620px]">
          <Sidebar />
          <FileList />
        </div>
        <div className="flex flex-1 items-center pl-[14px] text-[#26416a]">
          <span className="w-[57px]"><Txt wide>2 个项目</Txt></span>
          <span className="h-[12px] w-px bg-[#e5e5e5]" />
          <span className="ml-[10px] w-[86px]"><Txt wide>选中 1 个项目</Txt></span>
          <span className="h-[12px] w-px bg-[#e5e5e5]" />
        </div>
      </div>

      <div className="absolute left-[179px] top-[252px] h-[30px] w-[176px] border-2 border-[#f00]" />

      <div className="absolute left-[577px] top-[83px] h-[790px] w-[347px] whitespace-nowrap border border-[#a0a0a0] bg-[#f1f1f1] px-[2px] py-1">
        <MenuRows items={mainItems} />
      </div>
      <div className="absolute left-[918px] top-[339px] h-[540px] w-[298px] whitespace-nowrap border border-[#a0a0a0] bg-[#f1f1f1] px-[2px] py-1">
        <MenuRows items={svnItems} />
      </div>

      <div className="absolute left-[573px] top-[445px] h-[26px] w-[141px] border-2 border-[#f00]" />
      <div className="absolute left-[928px] top-[678px] h-[26px] w-[129px] border-2 border-[#f00]" />
    </div>
  );
}
